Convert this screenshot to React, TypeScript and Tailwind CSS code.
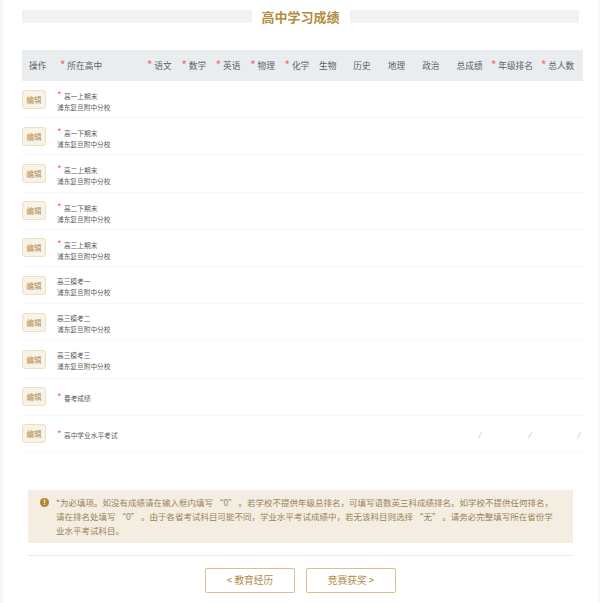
const font = { fontFamily: '"Noto Sans CJK SC", "Liberation Sans", sans-serif' };

const headers = [
  { label: '操作', required: false, cls: 'pl-[7px]' },
  { label: '所在高中', required: true, cls: 'pl-[3px]' },
  { label: '语文', required: true, cls: 'pl-[4px]' },
  { label: '数学', required: true, cls: 'pl-[4px]' },
  { label: '英语', required: true, cls: 'pl-[4px]' },
  { label: '物理', required: true, cls: 'pl-[4px]' },
  { label: '化学', required: true, cls: 'pl-[4px]' },
  { label: '生物', required: false, cls: 'pl-[4px]' },
  { label: '历史', required: false, cls: 'pl-[4px]' },
  { label: '地理', required: false, cls: 'pl-[4px]' },
  { label: '政治', required: false, cls: 'pl-[4px]' },
  { label: '总成绩', required: false, cls: 'pl-[4px]' },
  { label: '年级排名', required: true, cls: 'pl-[4px]' },
  { label: '总人数', required: true, cls: 'pl-[4px]' },
];

const rows = [
  { name: '高一上期末', required: true, school: true },
  { name: '高一下期末', required: true, school: true },
  { name: '高二上期末', required: true, school: true },
  { name: '高二下期末', required: true, school: true },
  { name: '高三上期末', required: true, school: true },
  { name: '高三模考一', required: false, school: true },
  { name: '高三模考二', required: false, school: true },
  { name: '高三模考三', required: false, school: true },
  { name: '春考成绩', required: true, school: false },
  { name: '高中学业水平考试', required: true, school: false, slashes: true },
];

const noteLines = [
  '*为必填项。如没有成绩请在输入框内填写 “0” 。若学校不提供年级总排名，可填写语数英三科成绩排名。如学校不提供任何排名，',
  '请在排名处填写 “0” 。由于各省考试科目可能不同，学业水平考试成绩中，若无该科目则选择 “无” 。请务必完整填写所在省份学',
  '业水平考试科目。',
];

const cols = 'grid grid-cols-[35px_86px_repeat(10,34.4px)_50px_46px] w-[561px]';

function Row({ row }: { row: (typeof rows)[number] }) {
  return (
    <div className={`${cols} h-[37.2px] items-center border-b border-[#f7f7f7]`}>
      <div>
        <button className="block w-[24px] h-[19px] rounded-[3px] border border-[#eedfc0] bg-[#f8f3e8] text-[7.5px] leading-[17px] text-[#b08c48] text-center">
          编辑
        </button>
      </div>
      <div className="whitespace-nowrap text-[6.7px] leading-[11px] text-[#5c5c5c] pt-[3px]">
        <div className={row.required && row.school ? 'pt-[3px]' : ''}>
          {row.required && (
            <span className="inline-block w-[5px] mr-[2px] h-[8px] align-top text-[10px] leading-[8px] text-[#f56c6c]">*</span>
          )}
          {row.name}
        </div>
        {row.school && <div>浦东复旦附中分校</div>}
      </div>
      {row.slashes && (
        <>
          <div className="col-start-12 text-right pr-[6px] text-[7px] italic text-[#aaa]">/</div>
          <div className="text-right pr-[6px] text-[7px] italic text-[#aaa]">/</div>
          <div className="text-right pr-[3px] text-[7px] italic text-[#aaa]">/</div>
        </>
      )}
    </div>
  );
}

export default function App() {
  return (
    <div className="h-[603px] overflow-hidden bg-[#f7f7f7] pl-[3px] pr-[2px]" style={font}>
      <div className="h-full bg-white pl-[19px] pt-[10px]">
        <div className="flex items-center w-[557px] gap-[10px]">
          <div className="flex-1 h-[13px] bg-[#f2f2f2]" />
          <h2 className="text-[13px] leading-[13px] font-bold text-[#b38c42]">高中学习成绩</h2>
          <div className="flex-1 h-[13px] bg-[#f2f2f2]" />
        </div>

        <div className={`${cols} h-[31px] mt-[27px] pt-[1px] items-center bg-[#e9edf0] text-[8.7px] text-[#5e5e5e] whitespace-nowrap`}>
          {headers.map((h) => (
            <div key={h.label} className={h.cls}>
              {h.required && <span className="text-[#f56c6c] text-[11px] leading-none font-medium mr-[2px]">*</span>}
              {h.label}
            </div>
          ))}
        </div>

        {rows.map((r) => (
          <Row key={r.name} row={r} />
        ))}

        <div className="ml-[6px] w-[545px] mt-[37px] h-[53px] bg-[#f3ede2] flex pl-[12px] pt-[5px] text-[8.5px] leading-[14px] text-[#9a8455]">
          <span className="shrink-0 w-[9px] h-[9px] mt-[3px] mr-[7px] rounded-full bg-[#b0872f] text-white text-[7px] leading-[9px] font-bold text-center">!</span>
          <div className="whitespace-nowrap">
            {noteLines.map((line) => (
              <p key={line}>{line}</p>
            ))}
          </div>
        </div>

        <div className="ml-[6px] w-[545px] mt-[12px] border-t border-[#e8e8e8] flex justify-center gap-[11px] pt-[12px]">
          <button className="w-[90px] h-[25px] rounded-[2px] border border-[#d9c08c] bg-white text-[9.7px] text-[#b08c48]">&lt; 教育经历</button>
          <button className="w-[90px] h-[25px] rounded-[2px] border border-[#d9c08c] bg-white text-[9.7px] text-[#b08c48]">竞赛获奖 &gt;</button>
        </div>
      </div>
    </div>
  );
}
